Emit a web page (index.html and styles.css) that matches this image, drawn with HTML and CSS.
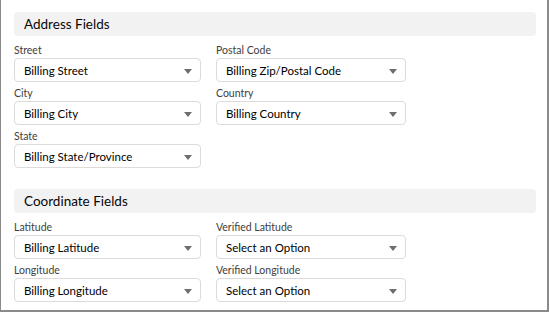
FILE: index.html
```html
<!DOCTYPE html>
<html lang="en">
<head>
  <meta charset="UTF-8">
  <meta name="viewport" content="width=device-width, initial-scale=1.0">
  <title>Address Settings</title>
  <link rel="stylesheet" href="styles.css">
</head>
<body>

  <div class="frame">

    <!-- Address Section -->
    <div class="section-title">Address Fields</div>
    <div class="fields">
      <div class="field">
        <label>Street</label>
        <div class="picklist"><span>Billing Street</span><i class="arrow"></i></div>
      </div>
      <div class="field">
        <label>Postal Code</label>
        <div class="picklist"><span>Billing Zip/Postal Code</span><i class="arrow"></i></div>
      </div>
      <div class="field">
        <label>City</label>
        <div class="picklist"><span>Billing City</span><i class="arrow"></i></div>
      </div>
      <div class="field">
        <label>Country</label>
        <div class="picklist"><span>Billing Country</span><i class="arrow"></i></div>
      </div>
      <div class="field">
        <label>State</label>
        <div class="picklist"><span>Billing State/Province</span><i class="arrow"></i></div>
      </div>
    </div>

    <!-- Coordinate Section -->
    <div class="section-title coords">Coordinate Fields</div>
    <div class="fields">
      <div class="field">
        <label>Latitude</label>
        <div class="picklist"><span>Billing Latitude</span><i class="arrow"></i></div>
      </div>
      <div class="field">
        <label>Verified Latitude</label>
        <div class="picklist"><span>Select an Option</span><i class="arrow"></i></div>
      </div>
      <div class="field">
        <label>Longitude</label>
        <div class="picklist"><span>Billing Longitude</span><i class="arrow"></i></div>
      </div>
      <div class="field">
        <label>Verified Longitude</label>
        <div class="picklist"><span>Select an Option</span><i class="arrow"></i></div>
      </div>
    </div>

  </div>

</body>
</html>
```

FILE: styles.css
```css
body {
  font-family: Lato, "Open Sans", sans-serif;
  margin: 0;
  background: #fff;
  color: #080707;
}

.frame {
  width: 549px;
  height: 312px;
  box-sizing: border-box;
  border-left: 1px solid #8a8a8a;
  border-right: 2px solid #8a8a8a;
  border-bottom: 2px solid #8a8a8a;
  padding: 12px 11px 0 13px;
}

/* Section headers */
.section-title {
  height: 24px;
  line-height: 24px;
  background: #f3f2f2;
  border-radius: 4px;
  padding-left: 10px;
  font-size: 13.5px;
  margin-bottom: 3px;
}
.section-title.coords {
  margin-top: 21px;
}

/* Field grid */
.fields {
  display: grid;
  grid-template-columns: 187px 190px;
  column-gap: 15px;
}
.field label {
  display: block;
  font-size: 10.5px;
  line-height: 15px;
  padding-top: 4px;
  color: #3e3e3c;
}
.picklist {
  height: 24px;
  box-sizing: border-box;
  border: 1px solid #dddbda;
  border-radius: 4px;
  display: flex;
  align-items: center;
  justify-content: space-between;
  padding: 0 8px 0 9px;
  font-size: 11.5px;
  color: #000;
}
.arrow {
  width: 0;
  height: 0;
  border-left: 4px solid transparent;
  border-right: 4px solid transparent;
  border-top: 5px solid #706e6b;
  margin-top: 2px;
}
```
